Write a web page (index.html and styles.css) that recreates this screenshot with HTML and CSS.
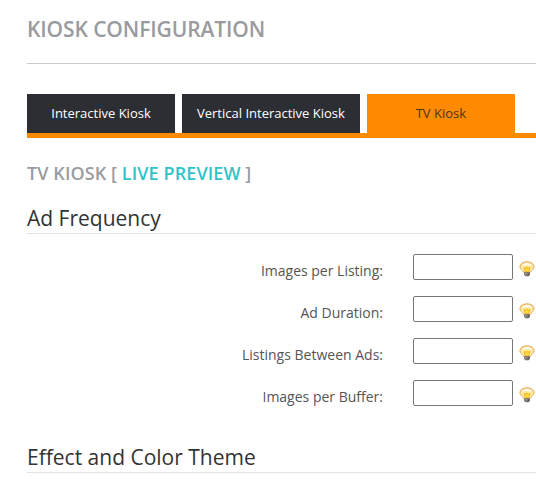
FILE: index.html
```html
<!DOCTYPE html>
<html lang="en">

<head>
   <meta charset="UTF-8">
   <meta name="viewport" content="width=device-width, initial-scale=1.0">
   <title>Kiosk Configuration</title>
   <link rel="stylesheet" href="styles.css">
</head>

<body>
   <!-- bulb shared by all the help links -->
   <svg class="sprite" width="0" height="0">
      <defs>
         <radialGradient id="glass" cx="50%" cy="60%" r="60%">
            <stop offset="0" stop-color="#ffdc3c" />
            <stop offset="0.5" stop-color="#ffedaa" />
            <stop offset="1" stop-color="#fad08a" />
         </radialGradient>
      </defs>
      <symbol id="bulb" viewBox="0 0 16 16">
         <path d="M8 .8C4 .8.900 2.900.900 5.700c0 2.700 2.900 3.600 3.700 5.600h6.800c.8-2 3.700-2.900 3.700-5.600C15.100 2.900 12 .8 8 .8z" fill="url(#glass)" stroke="#dfa65c" stroke-width=".9" />
         <path d="M2.800 4.800c.5-1.800 2.700-2.900 5.200-2.900s4.700 1.100 5.200 2.900c-1.500-.6-3-.8-5.200-.8s-3.700.2-5.200.8z" fill="#fffdf5" />
         <path d="M5 6.500l1.300 4.400h3.400L11 6.500l-1.500.8L8 6.500l-1.500.8z" fill="#ffdc32" stroke="#e3a52a" stroke-width=".7" />
         <path d="M5.100 11.300h5.800v2.500l-1.300 1.500H6.400l-1.300-1.500z" fill="#65625b" />
         <path d="M5.600 12.300h3M5.800 13.900h2.600" stroke="#c9c6bd" stroke-width=".6" />
      </symbol>
   </svg>

   <main class="page">
      <h1 class="page__title">Kiosk Configuration</h1>

      <nav class="tabs">
         <a href="#" class="tabs__link">Interactive Kiosk</a>
         <a href="#" class="tabs__link">Vertical Interactive Kiosk</a>
         <a href="#" class="tabs__link tabs__link--active">TV Kiosk</a>
      </nav>

      <h2 class="page__subtitle">TV Kiosk [ <a href="#" class="page__preview">Live Preview</a> ]</h2>

      <form class="form">
         <h3 class="form__heading">Ad Frequency</h3>
         <div class="form__rows">
            <div class="form__row">
               <label class="form__label" for="images-listing">Images per Listing:</label>
               <input class="form__input" id="images-listing" type="text">
               <svg class="form__hint"><use href="#bulb" /></svg>
            </div>
            <div class="form__row">
               <label class="form__label" for="ad-duration">Ad Duration:</label>
               <input class="form__input" id="ad-duration" type="text">
               <svg class="form__hint"><use href="#bulb" /></svg>
            </div>
            <div class="form__row">
               <label class="form__label" for="listings-between">Listings Between Ads:</label>
               <input class="form__input" id="listings-between" type="text">
               <svg class="form__hint"><use href="#bulb" /></svg>
            </div>
            <div class="form__row">
               <label class="form__label" for="images-buffer">Images per Buffer:</label>
               <input class="form__input" id="images-buffer" type="text">
               <svg class="form__hint"><use href="#bulb" /></svg>
            </div>
         </div>

         <h3 class="form__heading">Effect and Color Theme</h3>
      </form>
   </main>
</body>

</html>
```
FILE: styles.css
```css
*,
*::before,
*::after {
   box-sizing: border-box;
}

body {
   margin: 0;
   background-color: #fff;
   color: #555;
   font-family: "Open Sans", sans-serif;
   font-size: 14px;
}

.sprite {
   display: block;
}

.page {
   padding-left: 27px;
   overflow: hidden;
}

.page__title {
   height: 64px;
   margin: 0 0 30px;
   padding-top: 14px;
   border-bottom: 1px solid #ccc;
   color: #999b9f;
   font-size: 21px;
   font-weight: 600;
   letter-spacing: -0.1px;
   line-height: 30px;
   text-transform: uppercase;
}

.tabs {
   display: flex;
   gap: 7px;
   border-bottom: 5px solid #ff8a00;
}

.tabs__link {
   min-width: 148px;
   height: 39px;
   padding: 0 15px;
   background-color: #2d2e34;
   color: #fff;
   font-size: 13px;
   line-height: 39px;
   text-align: center;
   text-decoration: none;
   white-space: nowrap;
}

.tabs__link--active {
   background-color: #ff8a00;
   color: #4a3522;
}

.page__subtitle {
   margin: 23px 0 18px;
   color: #999b9f;
   font-size: 18px;
   font-weight: 600;
   letter-spacing: 0.09px;
   line-height: 24px;
   text-transform: uppercase;
}

.page__preview {
   color: #2fc4c8;
   text-decoration: none;
}

.form__heading {
   height: 31px;
   margin: 0;
   border-bottom: 1px solid #e2e2e2;
   color: #333;
   font-size: 21px;
   font-weight: 400;
   line-height: 30px;
}

.form__rows {
   display: flex;
   flex-direction: column;
   gap: 16px;
   padding: 20px 0 36px;
}

.form__row {
   display: flex;
   align-items: center;
   height: 26px;
}

.form__label {
   width: 356px;
   margin-right: 30px;
   padding-top: 8px;
   line-height: 20px;
   text-align: right;
}

.form__input {
   width: 100px;
   height: 26px;
   margin: 0 6px 0 0;
   border: 1px solid #767676;
   border-radius: 2px;
   background-color: #fff;
}

.form__hint {
   flex: none;
   width: 16px;
   height: 16px;
   margin-top: 4px;
}
```
